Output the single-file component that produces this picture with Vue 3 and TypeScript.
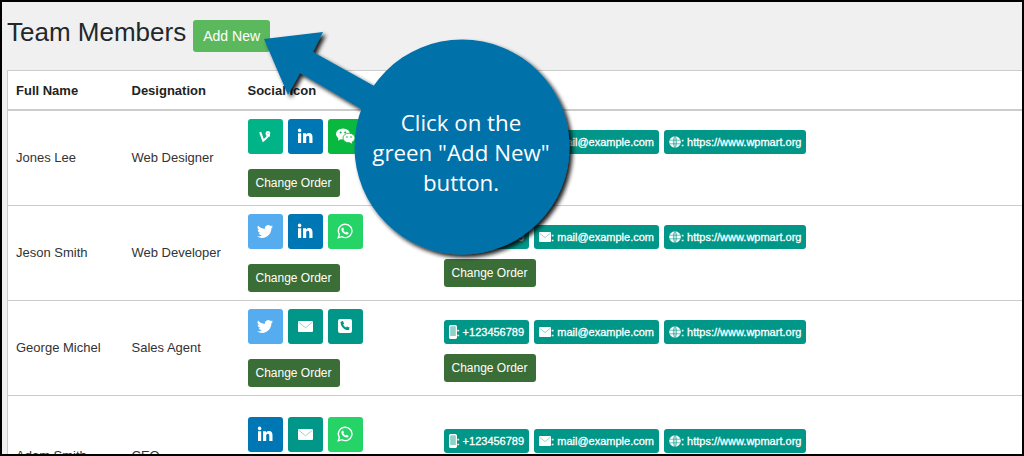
<script setup lang="ts">
type IconName = 'vine' | 'linkedin' | 'wechat' | 'twitter' | 'mail' | 'phone' | 'whatsapp'
interface Member {
  name: string
  role: string
  social: IconName[]
  tall?: boolean
}

const members: Member[] = [
  { name: 'Jones Lee', role: 'Web Designer', social: ['vine', 'linkedin', 'wechat'] },
  { name: 'Jeson Smith', role: 'Web Developer', social: ['twitter', 'linkedin', 'whatsapp'] },
  { name: 'George Michel', role: 'Sales Agent', social: ['twitter', 'mail', 'phone'] },
  { name: 'Adam Smith', role: 'CEO', social: ['linkedin', 'mail', 'whatsapp'], tall: true },
]
</script>

<template>
  <div class="frame">
    <header class="title-row">
      <h1>Team Members</h1>
      <button class="add">Add New</button>
    </header>
    <table class="members">
      <colgroup>
        <col class="c1" /><col class="c2" /><col class="c3" /><col />
      </colgroup>
      <thead>
        <tr>
          <th>Full Name</th>
          <th>Designation</th>
          <th>Social Icon</th>
          <th>Contact Info</th>
        </tr>
      </thead>
      <tbody>
        <tr v-for="m in members" :key="m.name" :class="{ tall: m.tall }">
          <td>{{ m.name }}</td>
          <td>{{ m.role }}</td>
          <td>
            <div class="icons">
              <span v-for="s in m.social" :key="s" class="ico" :class="s">
                <svg v-if="s === 'vine'" viewBox="0 0 16 16" width="14" height="14"><path d="M2.500 3.500 6 13.200c2.800-2 6.300-5.600 6.800-8.200.3-1.800-2.600-2.400-3-.2-.3 1.800 1.300 3.200 3.800 2.500" fill="none" stroke="#fff" stroke-width="2.400"/></svg>
                <svg v-else-if="s === 'linkedin'" viewBox="0 0 16 16" width="16" height="16"><path d="M1 5.300h3.200v9.700H1zM2.600 .6a1.800 1.800 0 110 3.600 1.800 1.800 0 010-3.600zM6 5.300h3v1.400c.5-.9 1.500-1.600 3-1.600 2.700 0 3.500 1.700 3.500 4.300V15h-3.200v-5c0-1.200-.3-2.200-1.500-2.200-1.300 0-1.600 1-1.600 2.200v5H6z" fill="#fff"/></svg>
                <svg v-else-if="s === 'wechat'" viewBox="0 0 19 16" width="19" height="16"><ellipse cx="7" cy="6" rx="7" ry="5.600" fill="#fff"/><path d="M2.500 9.500 2 12.800l3.400-2z" fill="#fff"/><ellipse cx="13" cy="10" rx="6" ry="4.800" fill="#fff" stroke="#09b83e" stroke-width=".8"/><path d="m15.500 13.500.7 2.200-2.600-1.500z" fill="#fff"/><circle cx="4.600" cy="4.500" r="1" fill="#09b83e"/><circle cx="9.200" cy="4.500" r="1" fill="#09b83e"/><circle cx="11" cy="9" r=".8" fill="#09b83e"/><circle cx="15" cy="9" r=".8" fill="#09b83e"/></svg>
                <svg v-else-if="s === 'twitter'" viewBox="0 0 16 16" width="16" height="16"><path d="M16 3.500a6.500 6.500 0 01-1.900.5 3.300 3.300 0 001.400-1.800 6.500 6.500 0 01-2 .8 3.300 3.300 0 00-5.600 3A9.300 9.300 0 011.100 2.600a3.300 3.300 0 001 4.400 3.300 3.300 0 01-1.500-.4 3.300 3.300 0 002.600 3.200 3.300 3.300 0 01-1.500.1 3.300 3.300 0 003.100 2.300A6.600 6.600 0 010 13.500 9.300 9.300 0 005 15c6 0 9.400-5 9.400-9.400v-.4A6.700 6.700 0 0016 3.500z" fill="#fff"/></svg>
                <svg v-else-if="s === 'mail'" viewBox="0 0 15 11" width="15" height="11"><rect width="15" height="11" rx="1" fill="#fff"/><path d="M.5 1 7.500 6.800 14.500 1" fill="none" stroke="#7fcac3" stroke-width=".8"/></svg>
                <svg v-else-if="s === 'phone'" viewBox="0 0 14 14" width="14" height="14"><rect width="14" height="14" rx="2" fill="#fff"/><path d="M3.200 2.400 5 2l1.100 2.700-1 .8c.6 1.300 1.600 2.300 2.900 3l.8-1L11.500 8.600l-.4 1.800c-.1.500-.5.800-1 .7C6 10.700 3 7.500 2.500 3.400c0-.5.200-.9.700-1z" fill="#009688"/></svg>
                <svg v-else viewBox="0 0 16 16" width="16" height="16"><path d="M8.100 1.200a6.700 6.700 0 00-5.700 10.200L1.300 14.800l3.600-1.100A6.700 6.700 0 108.100 1.200z" fill="none" stroke="#fff" stroke-width="1.400"/><path d="M5.700 4.400c.3 0 .5 0 .6.300l.6 1.500c0 .2 0 .4-.1.500l-.5.600c.5 1 1.300 1.700 2.400 2.300l.6-.7c.2-.2.300-.2.500-.1l1.400.7c.2.100.3.300.3.500 0 1-.8 1.700-1.900 1.600-2.500-.3-4.700-2.300-5.200-4.600-.2-1.200.3-2.200 1.300-2.600z" fill="#fff"/></svg>
              </span>
            </div>
            <button class="order">Change Order</button>
          </td>
          <td class="contact">
            <div class="chips">
              <span class="chip">
                <svg viewBox="0 0 8 14" width="8" height="14"><rect x=".6" y=".6" width="6.800" height="12.800" rx="1.200" fill="#8fd0c9" stroke="#fff" stroke-width="1.200"/><rect x=".6" y="11" width="6.800" height="2.400" fill="#fff"/></svg>
                <span class="chip-text">: +123456789</span>
              </span>
              <span class="chip">
                <svg viewBox="0 0 12 10" width="12" height="10"><rect width="12" height="10" rx="1" fill="#fff"/><path d="M.4 1 6 5.600 11.600 1" fill="none" stroke="#7fcac3" stroke-width=".8"/></svg>
                <span class="chip-text">: mail@example.com</span>
              </span>
              <span class="chip">
                <svg viewBox="0 0 12 12" width="12" height="12"><circle cx="6" cy="6" r="5.800" fill="#fff"/><path d="M.4 4.200h11.200M.4 7.800h11.200M6 .3v11.400M6 .3C3.800 2.500 3.800 9.500 6 11.700M6 .3c2.200 2.200 2.200 9.200 0 11.400" fill="none" stroke="#009688" stroke-width=".6"/></svg>
                <span class="chip-text">: https://www.wpmart.org</span>
              </span>
            </div>
            <button class="order">Change Order</button>
          </td>
        </tr>
      </tbody>
    </table>

    <svg class="callout" width="1024" height="456" viewBox="0 0 1024 456" aria-hidden="true">
      <defs>
        <filter id="sh" x="-20%" y="-20%" width="150%" height="150%">
          <feGaussianBlur in="SourceAlpha" stdDeviation="2" />
          <feOffset dx="3" dy="3" />
          <feComponentTransfer><feFuncA type="linear" slope="0.9" /></feComponentTransfer>
          <feMerge><feMergeNode /><feMergeNode in="SourceGraphic" /></feMerge>
        </filter>
      </defs>
      <g filter="url(#sh)" fill="#0071a9">
        <path d="M264 39 323 32 313 52 385 92 370 114 300 73 288 95z" />
        <circle cx="462" cy="147" r="107.500" />
      </g>
    </svg>
    <div class="bubble-text">Click on the<br />green "Add New"<br />button.</div>
  </div>
</template>

<style>
html, body { margin: 0; padding: 0; }
</style>

<style scoped>
.frame {
  position: relative;
  box-sizing: border-box;
  width: 1024px;
  height: 456px;
  overflow: hidden;
  border: 2px solid #000;
  background: #f0f0f0;
  font-family: "Liberation Sans", Arial, sans-serif;
  font-size: 13px;
  color: #333;
}
.title-row {
  display: flex;
  align-items: flex-start;
  gap: 7px;
  height: 68px;
  padding: 18px 0 0 5px;
  box-sizing: border-box;
}
h1 {
  margin: -1px 0 0;
  font-size: 26px;
  line-height: 26px;
  font-weight: 400;
  color: #23282d;
}
button { font-family: inherit; border: 0; color: #fff; cursor: pointer; }
.add {
  width: 77px;
  height: 32px;
  padding: 0;
  background: #5cb85c;
  border-radius: 3px;
  font-size: 14px;
}
.members {
  margin-left: 5px;
  width: 1040px;
  table-layout: fixed;
  border-collapse: collapse;
  background: #fff;
  border: 1px solid #ccc;
}
.c1 { width: 116px; }
.c2 { width: 116px; }
.c3 { width: 196px; }
th {
  height: 38px;
  padding: 0 8px;
  text-align: left;
  font-size: 13px;
  font-weight: 700;
  color: #222;
  border-bottom: 2px solid #ccc;
}
td {
  box-sizing: border-box;
  height: 95px;
  padding: 0 8px;
  vertical-align: middle;
  border-bottom: 1px solid #ccc;
}
tr.tall td { height: 121px; }
.icons { display: flex; gap: 5px; margin-bottom: 15px; }
.ico {
  display: flex;
  align-items: center;
  justify-content: center;
  width: 35px;
  height: 35px;
  border-radius: 3px;
}
.vine { background: #00b488; }
.linkedin { background: #0077b5; }
.wechat { background: #09b83e; }
.twitter { background: #55acee; }
.mail, .phone { background: #009688; }
.whatsapp { background: #25d366; }
.order {
  display: block;
  width: 92px;
  height: 28px;
  padding: 0;
  background: #3b6d37;
  border-radius: 3px;
  font-size: 12px;
}
.contact { padding-top: 6px; }
tr.tall .contact { padding-top: 8px; }
.chips { display: flex; gap: 5px; margin-bottom: 10px; }
.chip {
  display: inline-flex;
  align-items: center;
  height: 24px;
  padding: 0 5px;
  box-sizing: border-box;
  background: #009688;
  border-radius: 3px;
  color: #fff;
  font-size: 11px;
  -webkit-text-stroke: 0.3px #fff;
}
.chip-text { white-space: pre; }
.callout { position: absolute; left: -2px; top: -2px; pointer-events: none; }
.bubble-text {
  position: absolute;
  left: 351px;
  top: 106px;
  width: 216px;
  text-align: center;
  color: #fff;
  font-family: "Open Sans", sans-serif;
  font-size: 22.300px;
  line-height: 30px;
}
</style>
